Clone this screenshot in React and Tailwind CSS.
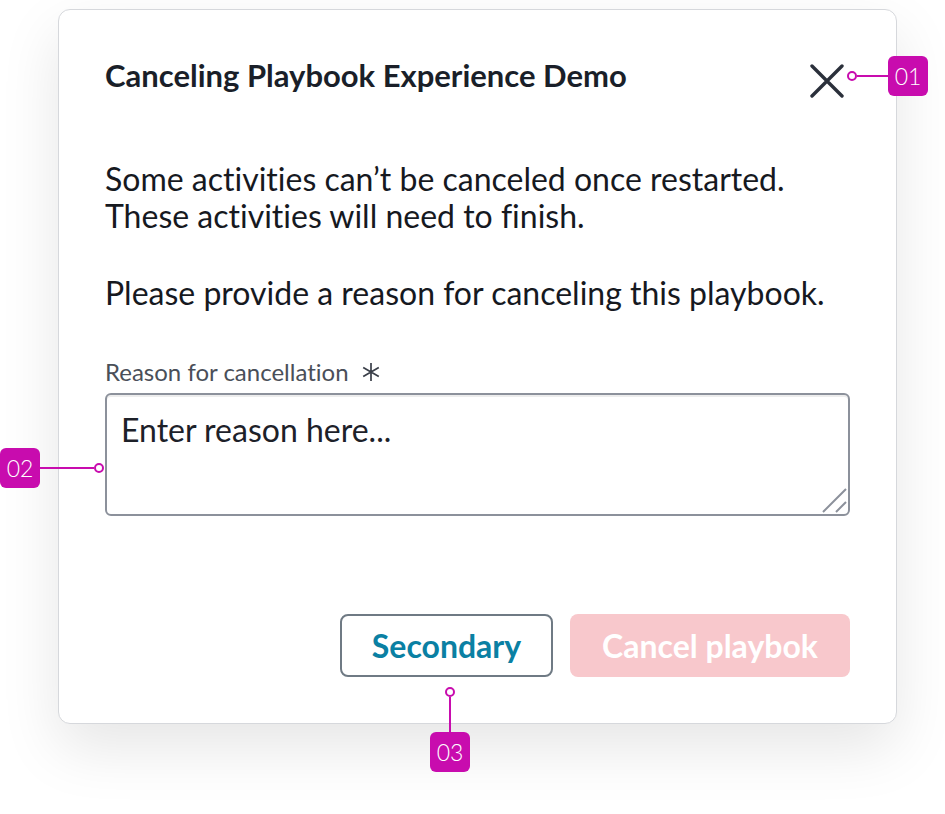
export default function App() {
  const font = { fontFamily: "Lato, 'Noto Sans', sans-serif" };
  const badge = "w-[40px] h-[40px] shrink-0 rounded-[6px] bg-[#c80cae] flex items-center justify-center text-white text-[23px] font-light";
  const dot = "w-[10px] h-[10px] shrink-0 rounded-full border-2 border-[#c80cae] bg-white";
  return (
    <div className="relative w-[945px] h-[814px] bg-white overflow-hidden pl-[58px] pt-[9px] [font-variant-ligatures:none]" style={font}>
      <div className="w-[839px] h-[715px] rounded-[12px] border border-[#d6d8dc] bg-white shadow-[0_24px_60px_rgba(0,0,0,0.10)] flex flex-col pl-[46px] pr-[46px] pt-[46px] pb-[46px]">
        <div className="flex items-start justify-between">
          <h1 className="text-[31px] font-bold text-[#1a1f29] leading-[38px]">
            Canceling Playbook Experience Demo
          </h1>
          <svg width="34" height="34" viewBox="0 0 34 34" className="mt-[8px] mr-[6px]">
            <path d="M2 2 L32 32 M32 2 L2 32" stroke="#2b303b" strokeWidth="3.4" strokeLinecap="round" />
          </svg>
        </div>
        <div className="mt-[62px] text-[32px] leading-[37px] text-[#16191f]">
          <p>Some activities can’t be canceled once restarted.</p>
          <p>These activities will need to finish.</p>
          <p className="mt-[40px]">Please provide a reason for canceling this playbook.</p>
        </div>
        <div className="mt-[47px] flex items-center gap-[12px] text-[24px] leading-[28px] text-[#4a4f59]">
          <span>Reason for cancellation</span>
          <svg width="20" height="20" viewBox="0 0 20 20">
            <path d="M10 1 V19 M2.2 5.5 L17.8 14.5 M17.8 5.5 L2.2 14.5" stroke="#3a3f49" strokeWidth="1.7" />
          </svg>
        </div>
        <div className="relative mt-[7px] h-[123px] rounded-[6px] border-2 border-[#8c919b] bg-white shadow-[inset_0_2px_0_rgba(0,0,0,0.07)] px-[14px] pt-[16px] text-[32px] leading-[38px] text-[#1d2129]">
          Enter reason here...
          <svg width="28" height="28" viewBox="0 0 28 28" className="absolute right-[0px] bottom-[0px]">
            <path d="M3 26 L26 3 M16 26 L26 16" stroke="#8c919b" strokeWidth="2" />
          </svg>
        </div>
        <div className="mt-auto flex justify-end gap-[17px]">
          <button className="h-[63px] w-[213px] rounded-[8px] border-2 border-[#6f7a84] bg-white text-[32px] font-bold text-[#0a80a3]">
            Secondary
          </button>
          <button className="h-[63px] w-[280px] rounded-[8px] bg-[#f8c8cc] text-[32px] font-bold text-white">
            Cancel playbok
          </button>
        </div>
      </div>

      {/* annotation 01 */}
      <div className="absolute left-[847px] top-[56px] flex items-center">
        <div className={dot} />
        <div className="w-[31px] h-[2px] bg-[#c80cae]" />
        <div className={badge}>01</div>
      </div>

      {/* annotation 02 */}
      <div className="absolute left-[0px] top-[448px] flex items-center">
        <div className={badge}>02</div>
        <div className="w-[54px] h-[2px] bg-[#c80cae]" />
        <div className={dot} />
      </div>

      {/* annotation 03 */}
      <div className="absolute left-[430px] top-[687px] w-[40px] flex flex-col items-center">
        <div className={dot} />
        <div className="w-[2px] h-[35px] bg-[#c80cae]" />
        <div className={badge}>03</div>
      </div>
    </div>
  );
}
